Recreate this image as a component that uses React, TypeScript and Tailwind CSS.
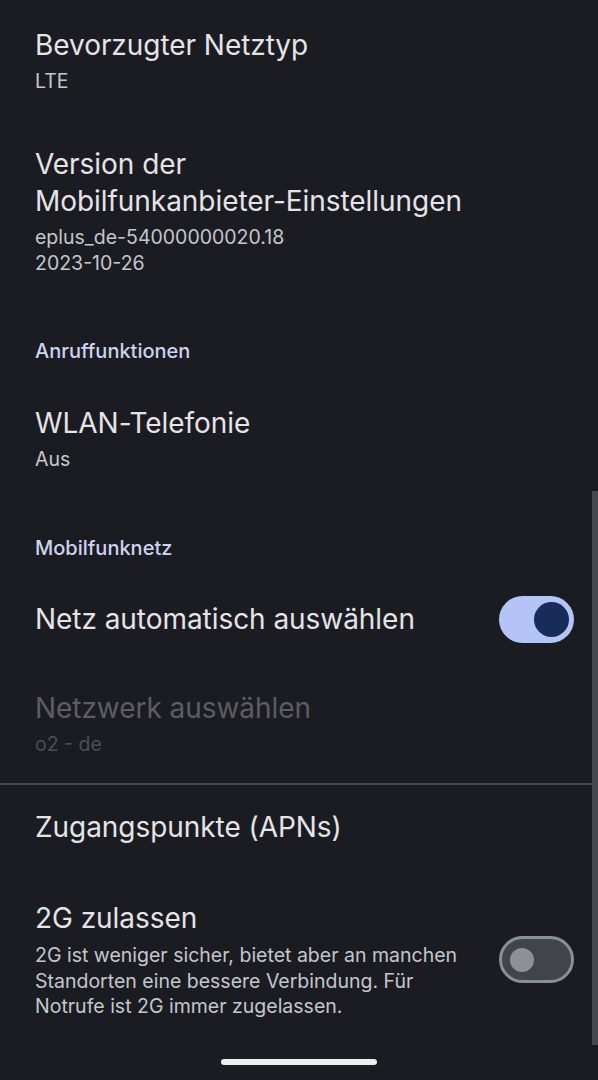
import React from 'react';

const font = { fontFamily: 'Inter, Roboto, "Noto Sans", sans-serif' };

const Title: React.FC<{ children: React.ReactNode; disabled?: boolean }> = ({ children, disabled }) => (
  <div className={`text-[28px] leading-[37px] tracking-[-0.05px] ${disabled ? 'text-[#5b5d62]' : 'text-[#e4e3e8]'}`}>{children}</div>
);

const Sub: React.FC<{ children: React.ReactNode; disabled?: boolean }> = ({ children, disabled }) => (
  <div className={`mt-[4px] text-[19.5px] leading-[26px] ${disabled ? 'text-[#4c4e53]' : 'text-[#c4c6cd]'}`}>{children}</div>
);

const Header: React.FC<{ children: React.ReactNode; className?: string }> = ({ children, className }) => (
  <div className={`text-[20px] leading-[24px] font-medium text-[#cdd3f0] ${className ?? ''}`}>{children}</div>
);

const Switch: React.FC<{ on: boolean }> = ({ on }) =>
  on ? (
    <div className="w-[75px] h-[47px] rounded-full bg-[#b4c4f6] flex items-center justify-end pr-[5px] shrink-0">
      <div className="w-[35px] h-[35px] rounded-full bg-[#182c5b]" />
    </div>
  ) : (
    <div className="w-[75px] h-[47px] rounded-full bg-[#42444c] border-[3px] border-[#8c8e96] flex items-center pl-[8px] shrink-0">
      <div className="w-[24px] h-[24px] rounded-full bg-[#8e9098]" />
    </div>
  );

export default function App() {
  return (
    <div className="relative w-[598px] h-[1080px] overflow-hidden bg-[#1b1c21]" style={font}>
      <div className="pt-[27px]">
        <div className="px-[35px]">
          <Title>Bevorzugter Netztyp</Title>
          <Sub>LTE</Sub>
        </div>

        <div className="px-[35px] mt-[52px]">
          <Title>
            Version der
            <br />
            <span className="whitespace-nowrap">Mobilfunkanbieter-Einstellungen</span>
          </Title>
          <Sub>
            eplus_de-54000000020.18
            <br />
            2023-10-26
          </Sub>
        </div>

        <Header className="px-[35px] mt-[63px]">Anruffunktionen</Header>

        <div className="px-[35px] mt-[42px]">
          <Title>WLAN-Telefonie</Title>
          <Sub>Aus</Sub>
        </div>

        <Header className="px-[35px] mt-[64px]">Mobilfunknetz</Header>

        <div className="pl-[35px] pr-[24px] mt-[36px] flex items-center justify-between">
          <Title>Netz automatisch auswählen</Title>
          <Switch on />
        </div>

        <div className="px-[35px] mt-[47px]">
          <Title disabled>Netzwerk auswählen</Title>
          <Sub disabled>o2 - de</Sub>
        </div>

        <div className="mt-[26px] h-[2px] w-[592px] bg-[#45464b]" />

        <div className="px-[35px] mt-[24px]">
          <Title>Zugangspunkte (APNs)</Title>
        </div>

        <div className="pl-[35px] pr-[24px] mt-[54px] flex items-center justify-between">
          <div>
            <Title>2G zulassen</Title>
            <div className="mt-[6px] text-[19.5px] leading-[25.5px] text-[#c4c6cd] whitespace-nowrap">
              2G ist weniger sicher, bietet aber an manchen
              <br />
              Standorten eine bessere Verbindung. Für
              <br />
              Notrufe ist 2G immer zugelassen.
            </div>
          </div>
          <Switch on={false} />
        </div>
      </div>

      {/* scrollbar */}
      <div className="absolute right-0 top-[491px] w-[6px] h-[554px] bg-[#47484d]" />

      {/* gesture handle */}
      <div className="absolute left-[221px] top-[1059px] w-[156px] h-[6px] rounded-full bg-[#ededed]" />
    </div>
  );
}
